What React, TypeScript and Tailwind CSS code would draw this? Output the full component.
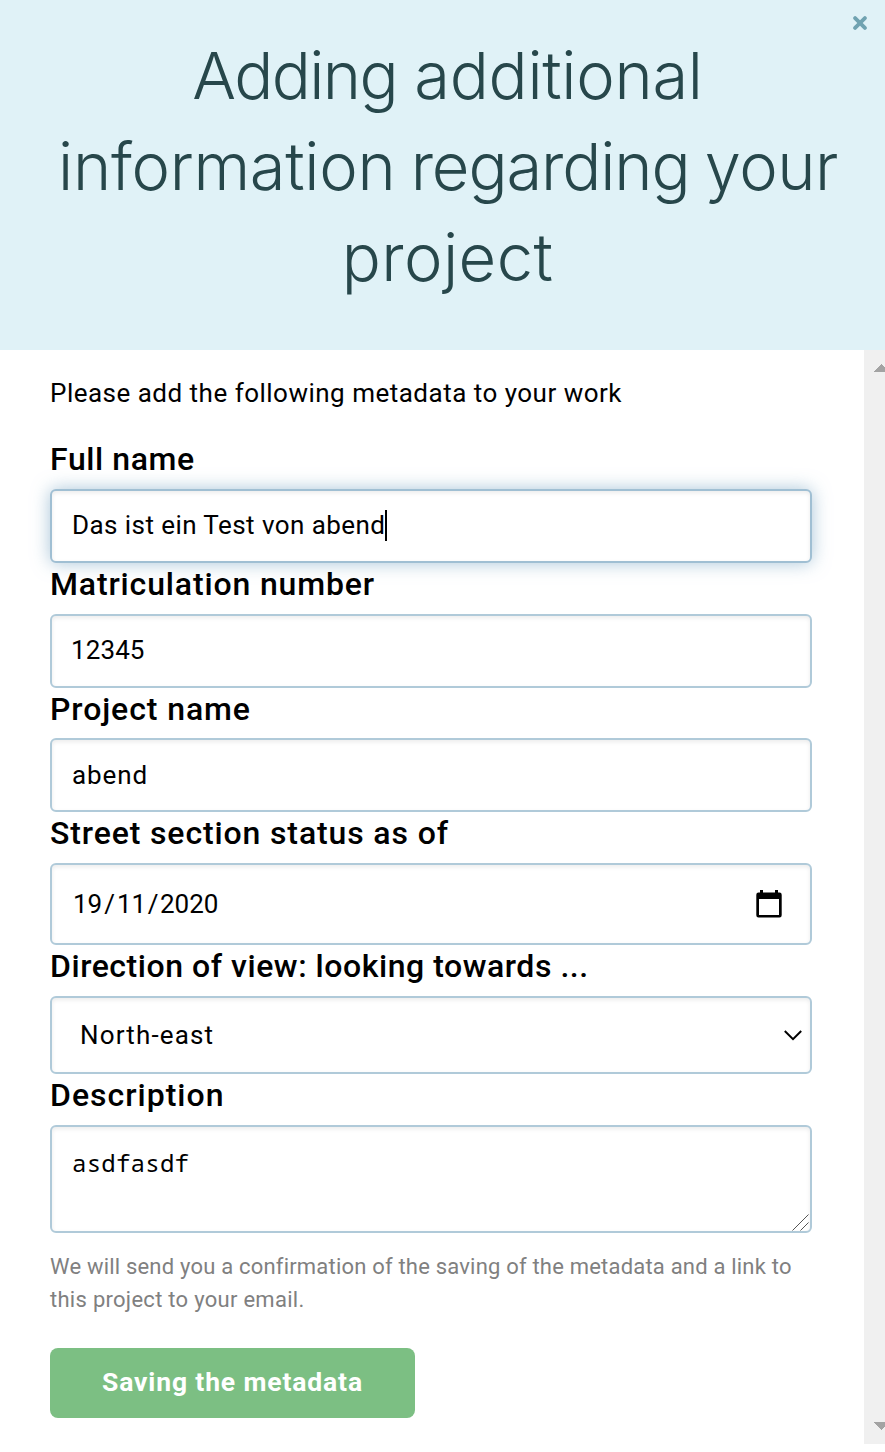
import type { ReactNode } from 'react';

const boxShadow = 'shadow-[inset_0_2px_4px_rgba(0,0,0,0.08)]';
const fieldBase =
  'flex w-[762px] rounded-[6px] border-2 bg-white px-5 text-[26px] leading-[30px] text-black';

function Label({ children, spacing }: { children: ReactNode; spacing: string }) {
  return (
    <label className={`block h-[42px] text-[32px] leading-[43px] font-medium whitespace-nowrap text-black ${spacing}`}>
      {children}
    </label>
  );
}

function ScrollArrow({ down = false }: { down?: boolean }) {
  return (
    <svg width="16" height="8" viewBox="0 0 16 8" className="shrink-0" shapeRendering="crispEdges">
      <path d={down ? 'M0 0h16L8 8z' : 'M0 8h16L8 0z'} fill="#a3a3a3" />
    </svg>
  );
}

export default function App() {
  return (
    <div className="h-[1452px] w-[885px] overflow-hidden bg-white font-['Roboto',sans-serif]">
      <div className="relative w-[898px]">
        <header className="h-[350px] bg-[#e0f2f7] pt-[30px] pr-[2px] text-center font-['Inter',sans-serif] text-[65px] leading-[91px] font-light text-[#27474b]">
          <h1 className="[word-spacing:-1px]">
            <span className="block pr-[1px]">
              <span className="tracking-[-1.6px]">Adding</span> <span className="tracking-[-0.3px]">additional</span>
            </span>
            <span className="block [word-spacing:-3px]">
              <span className="tracking-[-0.3px]">information</span> <span className="tracking-[-1.1px]">regarding</span>{' '}
              <span className="tracking-[-0.5px]">your</span>
            </span>
            <span className="block pr-[1px] tracking-[0.4px]">project</span>
          </h1>
          <button type="button" aria-label="Close" className="absolute top-[16px] left-[853px]">
            <svg width="14" height="14" viewBox="0 0 14 14" fill="none" stroke="#70a3b1" strokeWidth="3.8" strokeLinecap="round">
              <path d="M2.1 2.1l9.8 9.8M11.9 2.1l-9.8 9.8" />
            </svg>
          </button>
        </header>

        <div className="flex h-[1094px]">
          <main className="flex w-[864px] shrink-0 flex-col pl-[50px]">
            <p className="mt-[23px] h-[40px] text-[26px] leading-[40px] whitespace-nowrap text-black">
              <span className="tracking-[0.49px]">Please add the following metadata to your work</span>
            </p>

            <div className="mt-[25px]">
              <Label spacing="tracking-[0.6px]">Full name</Label>
              <div className={`${fieldBase} mt-[9px] h-[74px] items-center border-[#a0bfd3] pb-[2px] shadow-[0_0_18px_rgba(133,173,200,0.7),inset_0_2px_4px_rgba(0,0,0,0.08)]`}>
                <span className="tracking-[0.43px]">Das ist ein Test von abend</span>
                <span className="h-[31px] w-[2px] bg-black" />
              </div>
            </div>

            <div>
              <Label spacing="tracking-[0.85px]">Matriculation number</Label>
              <div className={`${fieldBase} mt-[9px] h-[74px] items-center border-[#b0cad9] pb-[2px] ${boxShadow}`}>
                <span className="-ml-[1px] tracking-[0.1px]">12345</span>
              </div>
            </div>

            <div>
              <Label spacing="tracking-[0.9px]">Project name</Label>
              <div className={`${fieldBase} mt-[8px] h-[74px] items-center border-[#b0cad9] ${boxShadow}`}>
                <span className="tracking-[0.9px]">abend</span>
              </div>
            </div>

            <div>
              <Label spacing="tracking-[0.87px]">Street section status as of</Label>
              <div className={`${fieldBase} mt-[9px] h-[82px] items-center justify-between border-[#b0cad9] ${boxShadow}`}>
                <span className="pl-[1px]">19<span className="mx-[2px]">/</span>11<span className="mx-[1.5px]">/</span>2020</span>
                <svg width="26" height="28" viewBox="0 0 26 28" className="mr-[8px]">
                  <path fillRule="evenodd" d="M4 0h3v2.5h12V0h3v2.5h1.5a2.2 2.2 0 0 1 2.2 2.2v20.6a2.2 2.2 0 0 1-2.2 2.2h-21a2.2 2.2 0 0 1-2.2-2.2V4.7a2.2 2.2 0 0 1 2.2-2.2H4zM3 9v16h20V9z" />
                </svg>
              </div>
            </div>

            <div>
              <Label spacing="tracking-[0.54px]">Direction of view: looking towards ...</Label>
              <div className={`${fieldBase} mt-[9px] h-[78px] items-center justify-between border-[#b0cad9] ${boxShadow}`}>
                <span className="pl-[8px] tracking-[1.15px]">North-east</span>
                <svg width="18" height="11" viewBox="0 0 18 11" fill="none" stroke="black" strokeWidth="2" className="-mr-[12px]">
                  <path d="M.8 1L9 9.2 17.2 1" />
                </svg>
              </div>
            </div>

            <div>
              <Label spacing="tracking-[1px]">Description</Label>
              <div className={`${fieldBase} relative mt-[9px] h-[108px] border-[#b0cad9] pt-[21px] ${boxShadow}`}>
                <span className="font-['Noto_Sans_Mono','DejaVu_Sans_Mono',monospace] text-[24px] tracking-[0.25px]">asdfasdf</span>
                <svg width="17" height="17" viewBox="0 0 17 17" className="absolute right-[1px] bottom-0" stroke="#555" strokeWidth="1">
                  <path d="M.5 16.5l16-16M8.5 16.5l8-8" />
                </svg>
              </div>
            </div>

            <p className="mt-[17px] text-[22px] leading-[33px] whitespace-nowrap text-[#808080]">
              <span className="block tracking-[0.2px]">We will send you a confirmation of the saving of the metadata and a link to</span>
              <span className="block tracking-[0.28px]">this project to your email.</span>
            </p>

            <button type="button" className="mt-[32px] h-[70px] w-[365px] rounded-[8px] bg-[#7cbf83] pb-[2px] text-[26.5px] leading-[30px] font-bold tracking-[0.85px] text-white">
              Saving the metadata
            </button>
          </main>

          <div className="flex w-[34px] shrink-0 flex-col items-start justify-between bg-[#f0f0f0] pt-[14px] pb-[14px] pl-[9px]">
            <ScrollArrow />
            <ScrollArrow down />
          </div>
        </div>
      </div>
    </div>
  );
}
